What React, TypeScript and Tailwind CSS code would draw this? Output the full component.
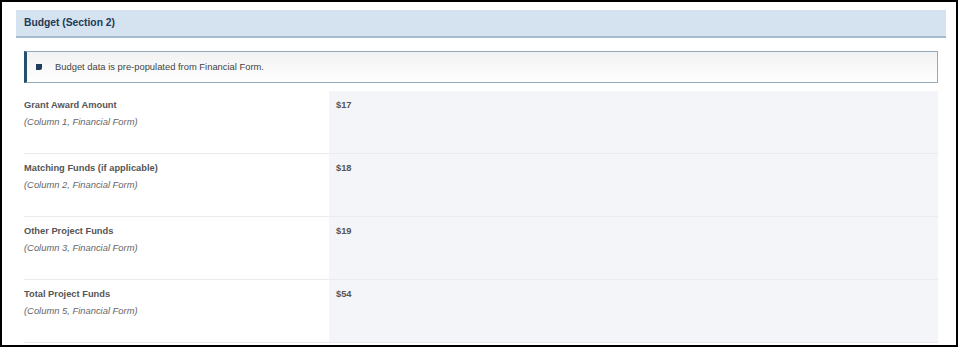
const rows = [
  { label: "Grant Award Amount", note: "(Column 1, Financial Form)", value: "$17" },
  { label: "Matching Funds (if applicable)", note: "(Column 2, Financial Form)", value: "$18" },
  { label: "Other Project Funds", note: "(Column 3, Financial Form)", value: "$19" },
  { label: "Total Project Funds", note: "(Column 5, Financial Form)", value: "$54" },
];

export default function App() {
  return (
    <div className="w-[958px] h-[348px] bg-white font-['Liberation_Sans',Arial,sans-serif]">
      <div className="w-[958px] h-[347px] border-2 border-black pt-[8px] pl-[14px] pr-[10px] overflow-hidden">
        <div className="h-[28px] bg-[#d4e3ef] border-b-2 border-[#a7bacb] flex items-center pl-[8px]">
          <span className="text-[10.3px] font-bold text-[#1d3a57]">Budget (Section 2)</span>
        </div>

        <div className="px-[8px]">
          <div className="mt-[13px] h-[32px] flex items-center border border-[#94a9b9] border-l-[3px] border-l-[#27506d] bg-gradient-to-b from-[#f2f2f2] to-white">
            <span className="ml-[9px] w-[6px] h-[6px] bg-[#1f3d5c] rounded-br-[2px]" />
            <span className="ml-[13px] text-[9.4px] text-[#444]">
              Budget data is pre-populated from Financial Form.
            </span>
          </div>

          <div className="mt-[8px]">
            {rows.map((r) => (
              <div key={r.label} className="flex h-[63px] border-b border-[#ebebeb]">
                <div className="w-[305px] pt-[7px]">
                  <div className="text-[9.3px] font-bold text-[#555] leading-[14px]">{r.label}</div>
                  <div className="mt-[3px] text-[9.4px] italic text-[#666] leading-[14px]">{r.note}</div>
                </div>
                <div className="flex-1 bg-[#f4f5f9] pt-[7px] pl-[7px]">
                  <div className="text-[9.3px] font-bold text-[#555] leading-[14px]">{r.value}</div>
                </div>
              </div>
            ))}
          </div>
        </div>
      </div>
    </div>
  );
}
